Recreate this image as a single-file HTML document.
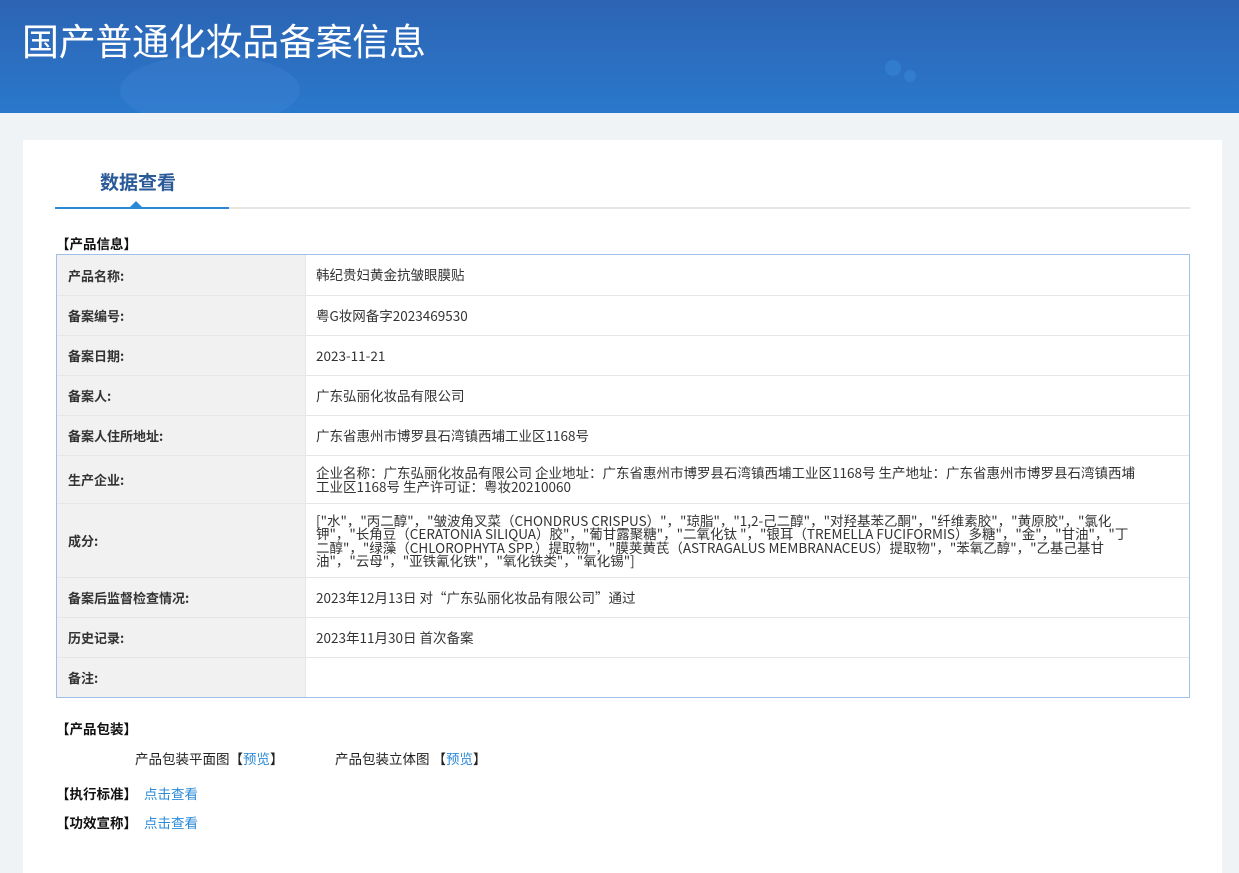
<!DOCTYPE html>
<html><head><meta charset="utf-8"><style>
*{margin:0;padding:0;box-sizing:border-box}
body{width:1239px;height:873px;background:#eff3f6;font-family:"Liberation Sans","Noto Sans CJK SC",sans-serif;position:relative;overflow:hidden;color:#333}
.hd{position:absolute;left:0;top:0;width:1239px;height:113px;background:linear-gradient(180deg,#2d64b3 0%,#2a78cc 100%);overflow:hidden}
.hd .b1{position:absolute;left:120px;top:55px;width:180px;height:70px;background:rgba(90,150,230,.18);border-radius:50%}
.hd .c1{position:absolute;left:885px;top:60px;width:16px;height:16px;border-radius:50%;background:rgba(60,140,220,.45)}
.hd .c2{position:absolute;left:904px;top:70px;width:12px;height:12px;border-radius:50%;background:rgba(60,140,220,.45)}
.hd h1{position:absolute;left:22px;top:12px;font-size:37px;font-weight:normal;color:#fff;font-family:"Noto Sans CJK SC",sans-serif;letter-spacing:-0.3px}
.card{position:absolute;left:23px;top:140px;width:1199px;height:733px;background:#fff}
.tab{position:absolute;left:100px;top:168px;font-size:19px;font-weight:bold;color:#2a5a98}
.tl{position:absolute;left:55px;top:207px;width:1135px;height:2px;background:#e5e5e5}
.ta{position:absolute;left:55px;top:207px;width:174px;height:2px;background:#2b8ad8}
.tri{position:absolute;left:130px;top:201px;width:0;height:0;border-left:6px solid transparent;border-right:6px solid transparent;border-bottom:6px solid #2b8ad8}
.sec{position:absolute;font-size:13.5px;font-weight:bold;color:#111;font-family:"Noto Sans CJK SC",sans-serif;line-height:16px}
.tbl{position:absolute;left:56px;top:254px;width:1134px;height:444px;border:1px solid #9fc0e8}
.row{position:absolute;left:0;width:1132px;border-bottom:1px solid #e6e6e6;display:flex}
.row .k{width:249px;background:#f1f1f1;font-size:13px;font-weight:bold;color:#333;padding-left:11px;display:flex;align-items:center;border-right:1px solid #e6e6e6;font-family:"Noto Sans CJK SC",sans-serif}
.row .v{flex:1;font-size:13.5px;color:#333;padding-left:10px;display:flex;align-items:center;line-height:13.5px;font-family:"Noto Sans CJK SC",sans-serif;white-space:nowrap}
.a{color:#2b8ad8}
.t{position:absolute;font-size:13.5px;color:#222;font-family:"Noto Sans CJK SC",sans-serif;line-height:16px}
</style></head><body>
<div class="hd"><div class="b1"></div><div class="c1"></div><div class="c2"></div><h1>国产普通化妆品备案信息</h1></div>
<div class="card"></div>
<div class="tab">数据查看</div>
<div class="tl"></div><div class="ta"></div><div class="tri"></div>
<div class="sec" style="left:56px;top:235px">【产品信息】</div>
<div class="tbl">
<div class="row" style="top:0;height:41px"><div class="k">产品名称:</div><div class="v">韩纪贵妇黄金抗皱眼膜贴</div></div>
<div class="row" style="top:41px;height:40px"><div class="k">备案编号:</div><div class="v">粤G妆网备字2023469530</div></div>
<div class="row" style="top:81px;height:40px"><div class="k">备案日期:</div><div class="v">2023-11-21</div></div>
<div class="row" style="top:121px;height:40px"><div class="k">备案人:</div><div class="v">广东弘丽化妆品有限公司</div></div>
<div class="row" style="top:161px;height:40px"><div class="k">备案人住所地址:</div><div class="v">广东省惠州市博罗县石湾镇西埔工业区1168号</div></div>
<div class="row" style="top:201px;height:48px"><div class="k">生产企业:</div><div class="v"><div>企业名称：广东弘丽化妆品有限公司 企业地址：广东省惠州市博罗县石湾镇西埔工业区1168号 生产地址：广东省惠州市博罗县石湾镇西埔<br>工业区1168号 生产许可证：粤妆20210060</div></div></div>
<div class="row" style="top:249px;height:74px"><div class="k">成分:</div><div class="v"><div>["水"，"丙二醇"，"皱波角叉菜（CHONDRUS CRISPUS）"，"琼脂"，"1,2-己二醇"，"对羟基苯乙酮"，"纤维素胶"，"黄原胶"，"氯化<br>钾"，"长角豆（CERATONIA SILIQUA）胶"，"葡甘露聚糖"，"二氧化钛 "，"银耳（TREMELLA FUCIFORMIS）多糖"，"金"，"甘油"，"丁<br>二醇"，"绿藻（CHLOROPHYTA SPP.）提取物"，"膜荚黄芪（ASTRAGALUS MEMBRANACEUS）提取物"，"苯氧乙醇"，"乙基己基甘<br>油"，"云母"，"亚铁氰化铁"，"氧化铁类"，"氧化锡"]</div></div></div>
<div class="row" style="top:323px;height:40px"><div class="k">备案后监督检查情况:</div><div class="v">2023年12月13日 对“广东弘丽化妆品有限公司”通过</div></div>
<div class="row" style="top:363px;height:40px"><div class="k">历史记录:</div><div class="v">2023年11月30日 首次备案</div></div>
<div class="row" style="top:403px;height:39px;border-bottom:none"><div class="k">备注:</div><div class="v"></div></div>
</div>
<div class="sec" style="left:56px;top:720px">【产品包装】</div>
<div class="t" style="left:135px;top:750px">产品包装平面图【<span class="a">预览</span>】</div>
<div class="t" style="left:335px;top:750px">产品包装立体图 【<span class="a">预览</span>】</div>
<div class="sec" style="left:56px;top:785px">【执行标准】<span class="a" style="font-weight:normal;margin-left:7px">点击查看</span></div>
<div class="sec" style="left:56px;top:814px">【功效宣称】<span class="a" style="font-weight:normal;margin-left:7px">点击查看</span></div>
</body></html>
